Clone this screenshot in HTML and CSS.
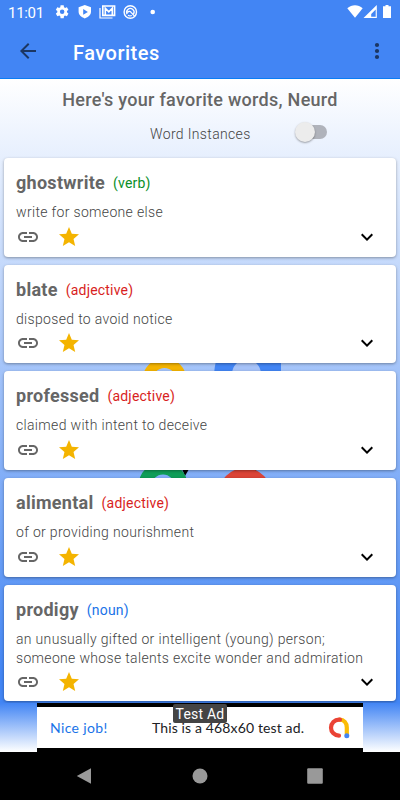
FILE: index.html
```html
<!DOCTYPE html>
<html lang="en">
<head>
    <meta charset="UTF-8">
    <meta name="viewport" content="width=device-width, initial-scale=1.0">
    <title>Favorites</title>
    <link rel="stylesheet" href="styles.css">
</head>
<body>
    <!-- shared icons -->
    <svg class="sprite" width="0" height="0">
        <symbol id="link" viewBox="0 0 24 24">
            <path d="M3.9 12c0-1.71 1.39-3.1 3.1-3.1h4V7H7c-2.76 0-5 2.24-5 5s2.24 5 5 5h4v-1.9H7c-1.71 0-3.1-1.39-3.1-3.1zM8 13h8v-2H8v2zm9-6h-4v1.9h4c1.71 0 3.1 1.39 3.1 3.1s-1.39 3.1-3.1 3.1h-4V17h4c2.76 0 5-2.24 5-5s-2.24-5-5-5z"/>
        </symbol>
        <symbol id="star" viewBox="0 0 24 24">
            <path d="M12 17.27L18.18 21l-1.64-7.03L22 9.24l-7.19-.61L12 2 9.19 8.63 2 9.24l5.46 4.73L5.82 21z"/>
        </symbol>
        <symbol id="chevron" viewBox="0 0 24 24">
            <path d="M7.41 8.59L12 13.17l4.59-4.58L18 10l-6 6-6-6z"/>
        </symbol>
    </svg>

    <header>
        <div class="status-bar">
            <span class="clock">11:01</span>
            <svg class="status-icons" width="100" height="16" viewBox="0 0 100 16" fill="#fff">
                <path transform="translate(-.6 0) scale(.645)" fill-rule="evenodd" d="M19.43 12.98c.04-.32.07-.64.07-.98s-.03-.66-.07-.98l2.11-1.65c.19-.15.24-.42.12-.64l-2-3.46c-.12-.22-.39-.3-.61-.22l-2.49 1c-.52-.4-1.08-.73-1.69-.98l-.38-2.65C14.46 2.18 14.25 2 14 2h-4c-.25 0-.46.18-.49.42l-.38 2.65c-.61.25-1.17.59-1.69.98l-2.49-1c-.23-.09-.49 0-.61.22l-2 3.46c-.13.22-.07.49.12.64l2.11 1.65c-.04.32-.07.65-.07.98s.03.66.07.98l-2.11 1.65c-.19.15-.24.42-.12.64l2 3.46c.12.22.39.3.61.22l2.49-1c.52.4 1.08.73 1.69.98l.38 2.65c.03.24.24.42.49.42h4c.25 0 .46-.18.49-.42l.38-2.65c.61-.25 1.17-.59 1.69-.98l2.49 1c.23.09.49 0 .61-.22l2-3.46c.12-.22.07-.49-.12-.64zM12 15.5a3.5 3.5 0 1 1 0-7 3.5 3.5 0 0 1 0 7z"/>
                <path fill-rule="evenodd" d="M29.8 1l6.2 2.2v4.6c0 3-2.5 5.4-6.2 6.6-3.7-1.2-6.2-3.6-6.2-6.6V3.2zM28.2 5v5.8l4.7-2.9z"/>
                <path d="M45 4v10h12.5" fill="none" stroke="#fff" stroke-width="1.2"/>
                <path d="M47.8 11.4V2h11.8v9.4zM50.3 11.4V4.3l3.5 3.6 3.5-3.6v7.1" fill="none" stroke="#fff" stroke-width="1.6"/>
                <circle cx="75.3" cy="8" r="6.2" fill="none" stroke="#fff" stroke-width="1.4"/>
                <path d="M72.2 10.2a3.7 3.7 0 1 1 6.4-.2M72.5 8.5c1.5-2 3-1 3.8.2l3.2 3.3M73 11.3a4 4 0 0 0 3.8.2" fill="none" stroke="#fff" stroke-width="1.3"/>
                <circle cx="97.7" cy="8" r="2.3"/>
            </svg>
            <svg class="signal-icons" width="48" height="16" viewBox="0 0 48 16" fill="#fff">
                <path d="M.3 4.2C4.8.2 11.2.2 15.7 4.2L8 13.7z"/>
                <path fill-rule="evenodd" d="M29.8 1v13H16.5zM28.7 5.5l-4.5 4.5v2.8h4.5z"/>
                <path d="M38.5 1h3v1.3h2.5v11.7h-8V2.3h2.5z"/>
            </svg>
        </div>
        <div class="toolbar">
            <svg class="back" width="24" height="24" viewBox="0 0 24 24"><path d="M20 11H7.83l5.59-5.59L12 4l-8 8 8 8 1.41-1.41L7.83 13H20v-2z"/></svg>
            <span class="title">Favorites</span>
            <svg class="more" width="6" height="18" viewBox="0 0 6 18"><circle cx="3" cy="3" r="2.1"/><circle cx="3" cy="9" r="2.1"/><circle cx="3" cy="15" r="2.1"/></svg>
        </div>
    </header>

    <main>
        <!-- logo behind the cards -->
        <svg class="backdrop" width="170" height="140" viewBox="130 350 170 140">
            <circle cx="164.5" cy="380" r="17" fill="none" stroke="#f4b400" stroke-width="10"/>
            <path d="M217 358h64v20h-67c0-8 1-14 3-20z" fill="#4285f4"/>
            <circle cx="246.5" cy="374" r="14.5" fill="#a5c2f8"/>
            <path d="M182 469h7l-4 7z"/>
            <circle cx="163" cy="486" r="18" fill="none" stroke="#0f9d58" stroke-width="13"/>
            <path d="M225 468h28l7 6z"/>
            <circle cx="245" cy="495" r="27" fill="#db4437"/>
        </svg>
        <h1>Here's your favorite words, Neurd</h1>
        <div class="toggle">
            <span>Word Instances</span>
            <div class="switch"></div>
        </div>

        <div class="cards">
            <div class="card">
                <h2>ghostwrite <span class="verb">(verb)</span></h2>
                <p>write for someone else</p>
                <div class="actions">
                    <svg class="link"><use href="#link"/></svg>
                    <svg class="star"><use href="#star"/></svg>
                    <svg class="chevron"><use href="#chevron"/></svg>
                </div>
            </div>
            <div class="card">
                <h2>blate <span class="adjective">(adjective)</span></h2>
                <p>disposed to avoid notice</p>
                <div class="actions">
                    <svg class="link"><use href="#link"/></svg>
                    <svg class="star"><use href="#star"/></svg>
                    <svg class="chevron"><use href="#chevron"/></svg>
                </div>
            </div>
            <div class="card">
                <h2>professed <span class="adjective">(adjective)</span></h2>
                <p>claimed with intent to deceive</p>
                <div class="actions">
                    <svg class="link"><use href="#link"/></svg>
                    <svg class="star"><use href="#star"/></svg>
                    <svg class="chevron"><use href="#chevron"/></svg>
                </div>
            </div>
            <div class="card">
                <h2>alimental <span class="adjective">(adjective)</span></h2>
                <p>of or providing nourishment</p>
                <div class="actions">
                    <svg class="link"><use href="#link"/></svg>
                    <svg class="star"><use href="#star"/></svg>
                    <svg class="chevron"><use href="#chevron"/></svg>
                </div>
            </div>
            <div class="card">
                <h2>prodigy <span class="noun">(noun)</span></h2>
                <p>an unusually gifted or intelligent (young) person;<br>someone whose talents excite wonder and admiration</p>
                <div class="actions">
                    <svg class="link"><use href="#link"/></svg>
                    <svg class="star"><use href="#star"/></svg>
                    <svg class="chevron"><use href="#chevron"/></svg>
                </div>
            </div>
        </div>
    </main>

    <div class="ad-row">
        <div class="ad">
            <span class="ad-label">Test Ad</span>
            <div class="ad-body">
                <span class="nice">Nice job!</span>
                <span class="ad-text">This is a 468x60 test ad.</span>
                <svg class="admob" width="22" height="22" viewBox="0 0 22 22" fill="none" stroke-width="4.2" stroke-linecap="round">
                    <path d="M11.5 2.7C16 2.7 18.8 6 18.8 10.5V17" stroke="#fbbc04"/>
                    <path d="M12 2.7H11A8 8 0 0 0 11 18.7" stroke="#ea4335"/>
                    <circle cx="18.8" cy="18.7" r="2.5" fill="#4285f4"/>
                </svg>
            </div>
        </div>
    </div>

    <footer>
        <svg width="16" height="18" viewBox="0 0 16 18"><path d="M.8 9L15 1.2v15.6z"/></svg>
        <svg width="16" height="16" viewBox="0 0 16 16"><circle cx="8" cy="8" r="7.5"/></svg>
        <svg width="16" height="16" viewBox="0 0 16 16"><rect x=".2" y=".2" width="15.6" height="15.6" rx="1"/></svg>
    </footer>
</body>
</html>
```
FILE: styles.css
```css
* {
    box-sizing: border-box;
}

body {
    margin: 0;
    width: 400px;
    height: 800px;
    overflow: hidden;
    display: flex;
    flex-direction: column;
    background: #000;
    font-family: Roboto, sans-serif;
    color: #666;
}

svg {
    display: block;
    flex: none;
}

.sprite {
    position: absolute;
}

header {
    height: 79px;
    flex: none;
    background: #4285f4;
    border-bottom: 1px solid #0a7df5;
    color: #fff;
}

.status-bar {
    height: 24px;
    display: flex;
    align-items: center;
    padding: 0 5px 0 8px;
}

.clock {
    width: 47px;
    padding-top: 1px;
    font-size: 15px;
    letter-spacing: -0.3px;
}

.signal-icons {
    margin-left: auto;
}

.toolbar {
    height: 54px;
    display: flex;
    align-items: center;
    padding: 0 20px 0 16px;
}

.back,
.more {
    fill: #1b3663;
}

.title {
    margin-left: 33px;
    padding-top: 3px;
    font-size: 20px;
    font-weight: 500;
    letter-spacing: 0.5px;
}

.more {
    margin-left: auto;
}

main {
    position: relative;
    height: 624px;
    flex: none;
    overflow: hidden;
    background: linear-gradient(#fff, #4285f4 96%);
}

.backdrop {
    position: absolute;
    left: 130px;
    top: 271px;
}

h1 {
    margin: 0;
    padding-top: 10px;
    font-size: 18px;
    font-weight: 500;
    letter-spacing: 0.28px;
    line-height: 22px;
    text-align: center;
}

.toggle {
    display: flex;
    align-items: center;
    height: 24px;
    margin: 10px 72px 0 150px;
    color: #444;
    font-size: 14px;
    font-weight: 300;
    letter-spacing: 0.35px;
    line-height: 20px;
}

.toggle span {
    padding-top: 1px;
}

.switch {
    position: relative;
    width: 28px;
    height: 14px;
    margin: -2px 1px 0 auto;
    border-radius: 7px;
    background: #b0b3bb;
}

.switch::before {
    content: "";
    position: absolute;
    left: -4px;
    top: -3px;
    width: 20px;
    height: 20px;
    border-radius: 50%;
    background: #ececec;
    box-shadow: 0 1px 2px rgba(0, 0, 0, 0.35);
}

.cards {
    position: relative;
    display: flex;
    flex-direction: column;
    gap: 8px;
    padding: 13px 4px 0;
}

.card {
    flex: none;
    min-height: 98.7px;
    padding: 14px 12px 7px;
    border-radius: 4px;
    background: #fff;
    box-shadow: 0 1px 3px rgba(0, 0, 0, 0.35);
}

h2 {
    display: flex;
    align-items: center;
    gap: 8px;
    margin: 0;
    font-size: 18px;
    font-weight: 700;
    letter-spacing: 0.28px;
    line-height: 22px;
}

h2 span {
    font-size: 14px;
    font-weight: 400;
    letter-spacing: 0.2px;
}

.verb {
    color: #0a8f28;
}

.adjective {
    color: #d81e22;
}

.noun {
    color: #1a73e8;
}

.card p {
    margin: 9px 0 0;
    color: #444;
    font-size: 14px;
    font-weight: 300;
    letter-spacing: 0.33px;
    line-height: 19px;
    white-space: nowrap;
}

.actions {
    display: flex;
    align-items: center;
    height: 24px;
    margin-top: 2.7px;
}

.link,
.star,
.chevron {
    width: 24px;
    height: 24px;
}

.link {
    fill: #666;
}

.star {
    margin-left: 17px;
    fill: #f4b400;
}

.chevron {
    margin: 0 5px 0 auto;
    fill: #000;
}

.ad-row {
    height: 49px;
    flex: none;
    padding: 0 37px;
    background: linear-gradient(#4285f4, #fff);
}

.ad {
    position: relative;
    height: 49px;
    padding: 4px 0;
    background: #000;
}

.ad-body {
    display: flex;
    align-items: center;
    height: 41px;
    padding: 0 13px;
    background: #fff;
    font-family: Lato, sans-serif;
    font-size: 14px;
    letter-spacing: 0.13px;
}

.nice {
    width: 102px;
    color: #1a73e8;
    letter-spacing: 0.35px;
}

.ad-text {
    color: #202124;
    white-space: nowrap;
}

.admob {
    margin-left: auto;
}

.ad-label {
    position: absolute;
    left: 136px;
    top: 1px;
    width: 54px;
    height: 19px;
    border-radius: 2px;
    background: #444;
    color: #fff;
    font-size: 14px;
    letter-spacing: 0.2px;
    line-height: 20px;
    text-align: center;
}

footer {
    display: flex;
    align-items: center;
    justify-content: space-between;
    height: 48px;
    padding: 0 77px 0 76px;
    fill: #999;
}
```
